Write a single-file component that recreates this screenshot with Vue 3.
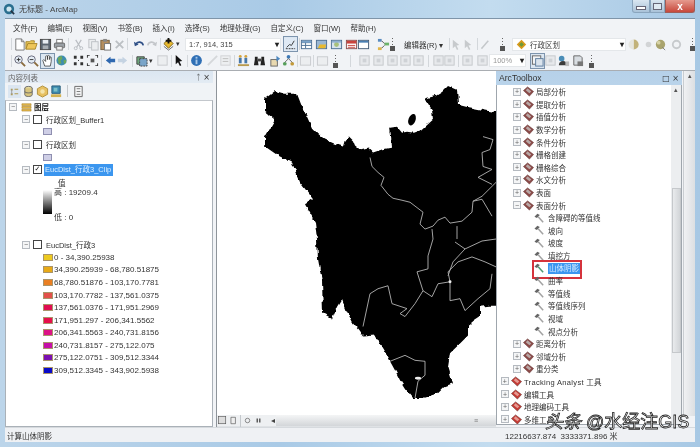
<script setup>
const I = {
  page: '<path d="M3 1h6l3 3v9H3z" fill="#fff" stroke="#777"/><path d="M9 1v3h3" fill="none" stroke="#777"/>',
  open: '<path d="M1 12V4h4l1-1h4v2" fill="#e8c85a" stroke="#a8852a"/><path d="M1 12l2-6h10l-2 6z" fill="#eec65a" stroke="#a8852a"/>',
  save: '<rect x="1.500" y="1.500" width="11" height="11" fill="#5b6570" stroke="#444"/><rect x="4" y="2" width="6" height="4" fill="#e8edf2"/><rect x="4" y="8" width="6" height="4" fill="#a7adb3"/>',
  print: '<rect x="4" y="1.500" width="6" height="4" fill="#fff" stroke="#777"/><rect x="1.500" y="5.500" width="11" height="5" rx="1" fill="#9aa0a6" stroke="#666"/><rect x="4" y="9" width="6" height="4" fill="#eee" stroke="#777"/>',
  cut: '<path d="M4 2l5 8M10 2l-5 8" stroke="#b9bdc2" stroke-width="1.300" fill="none"/><circle cx="4" cy="11" r="1.600" fill="none" stroke="#b9bdc2"/><circle cx="10" cy="11" r="1.600" fill="none" stroke="#b9bdc2"/>',
  copy: '<rect x="2" y="1.500" width="7" height="9" fill="#eceef0" stroke="#bcc0c4"/><rect x="5" y="4" width="7" height="9" fill="#eceef0" stroke="#bcc0c4"/>',
  paste: '<rect x="2" y="2.500" width="9" height="10" fill="#b48e5e" stroke="#77603f"/><rect x="4.500" y="1" width="4" height="3" fill="#888"/><rect x="6" y="6" width="6.500" height="7" fill="#fff" stroke="#777"/>',
  del: '<path d="M3 3l8 8M11 3l-8 8" stroke="#bcc0c4" stroke-width="2"/>',
  undo: '<path d="M3 7a4.200 4.200 0 0 1 8 1" fill="none" stroke="#2e4f86" stroke-width="1.800"/><path d="M1 4l1 5 4-2z" fill="#2e4f86"/>',
  redo: '<path d="M11 7a4.200 4.200 0 0 0-8 1" fill="none" stroke="#c3c6ca" stroke-width="1.800"/><path d="M13 4l-1 5-4-2z" fill="#c3c6ca"/>',
  add: '<path d="M7 1l5 5-5 5-5-5z" fill="#e8b92f" stroke="#7a6218"/><path d="M7 0v6M4 3h6" stroke="#111" stroke-width="2"/><path d="M2 9l5 4 5-4" fill="none" stroke="#666"/>',
  graph: '<rect x="0" y="0" width="14" height="14" fill="#dfe9f4"/><path d="M3 10l3-3 2 1 3-5" stroke="#333" fill="none"/><path d="M2 11.500h10" stroke="#333" stroke-dasharray="2 1"/>',
  table: '<rect x="1.500" y="2.500" width="11" height="9" fill="#fff" stroke="#4d6f93"/><path d="M1.500 5h11M1.500 8h11M6 3v8" stroke="#4d6f93"/><rect x="2" y="3" width="10" height="2" fill="#7ba3c9"/>',
  cat: '<rect x="1.500" y="2.500" width="11" height="9" fill="#9ab7d3" stroke="#4d6f93"/><path d="M3 11l2-4h7l-1 4z" fill="#e8b92f"/>',
  cat2: '<rect x="1.500" y="2.500" width="11" height="9" fill="#d7e3ee" stroke="#4d6f93"/><circle cx="7" cy="7" r="2.600" fill="#a8c07a"/><path d="M2 3h10v2H2z" fill="#8fb0cf"/>',
  red: '<rect x="1.500" y="2.500" width="11" height="9" fill="#fff" stroke="#8a4d4d"/><path d="M2 3h10v3H2z" fill="#c9423c"/><path d="M3 8h8M3 10h8" stroke="#c9423c"/>',
  win: '<rect x="1.500" y="2.500" width="11" height="9" fill="#fff" stroke="#435a74"/><rect x="2" y="3" width="10" height="2" fill="#4a7fb2"/>',
  model: '<rect x="1" y="1" width="4" height="3" fill="#5a8cc0"/><rect x="8" y="5" width="5" height="3" fill="#6db36b"/><rect x="1" y="10" width="4" height="3" fill="#e0b64a"/><path d="M5 3l3 3M5 11l3-3" stroke="#555"/>',
  gedit: '<path d="M3 11L10 3" stroke="#c4c7ca" stroke-width="1.600"/><path d="M2 12l2-1-1-1z" fill="#c4c7ca"/>',
  garrow: '<path d="M3 2v9l2.500-2 2 4 1.500-1-2-4 3-.5z" fill="#c7cacd"/>',
  moon: '<path d="M6 1.500a5.500 5.500 0 0 1 0 11z" fill="#c2b27a"/><path d="M6 1.500a5.500 5.500 0 0 0 0 11z" fill="#e6e6e0"/>',
  dot: '<circle cx="7" cy="7" r="3" fill="#d2d4d6"/>',
  geo: '<circle cx="7" cy="7" r="5" fill="#a9a36d"/><circle cx="5" cy="5" r="2" fill="#d7d3a5"/><path d="M9 10l3 3" stroke="#777"/>',
  ring: '<circle cx="7" cy="7" r="4" fill="none" stroke="#c7cacd" stroke-width="2"/>',
  zin: '<circle cx="6" cy="6" r="4" fill="#e5edf5" stroke="#667"/><path d="M9 9l4 4" stroke="#8a6b3c" stroke-width="2"/><path d="M4 6h4M6 4v4" stroke="#333"/>',
  zout: '<circle cx="6" cy="6" r="4" fill="#e5edf5" stroke="#667"/><path d="M9 9l4 4" stroke="#8a6b3c" stroke-width="2"/><path d="M4 6h4" stroke="#333"/>',
  pan: '<path d="M4 13L2 7l1-1 2 2V2.500l1-.5 1 .5V6l0-4 1-.5 1 .5v4l1-3 1 .5V8l-1 5z" fill="#fff" stroke="#333" stroke-width=".8"/>',
  globe: '<circle cx="7" cy="7" r="5.500" fill="#3f8db0"/><path d="M3 4l4-2 1 3-2 2 1 3-3 1z" fill="#6ea85c"/><path d="M9 7l3-1 0 3-2 2z" fill="#6ea85c"/>',
  fix1: '<path d="M2 2h3v3H2zM9 2h3v3H9zM2 9h3v3H2zM9 9h3v3H9z" fill="#333"/><path d="M6.500 6.500h1v1h-1z" fill="#333"/>',
  fix2: '<path d="M1 1h3v1H2v2H1zM10 1h3v3h-1V2h-2zM1 10h1v2h2v1H1zM12 10h1v3h-3v-1h2z" fill="#333"/><path d="M5 5h4v4H5z" fill="#555"/>',
  back: '<path d="M2 7l5-4v2h5v4H7v2z" fill="#2f68b0"/>',
  fwd: '<path d="M12 7L7 3v2H2v4h5v2z" fill="#c5d3e2"/>',
  layer: '<path d="M2 3h8v8H2z" fill="#6da67a" stroke="#444"/><path d="M5 5h8v8H5z" fill="#7aa5c9" stroke="#444" stroke-dasharray="2 1"/>',
  gbox: '<rect x="2" y="2" width="10" height="10" fill="#eceef0" stroke="#c6c9cc"/>',
  sel: '<path d="M4 1v10l2.500-2 2 4 1.500-1-2-4 3-.5z" fill="#111"/>',
  info: '<circle cx="7" cy="7" r="5.800" fill="#2f6fb5"/><rect x="6" y="6" width="2" height="5" fill="#a9c8e8"/><rect x="6" y="3" width="2" height="2" fill="#a9c8e8"/>',
  meas: '<path d="M2 12L12 2" stroke="#d5d7da" stroke-width="2"/>',
  lines: '<rect x="2" y="2" width="10" height="10" fill="#edeff1" stroke="#cfd1d4"/><path d="M4 5h6M4 8h6" stroke="#bbb"/>',
  cols: '<path d="M1 11h12v2H1z" fill="#b99a4e"/><rect x="2" y="4" width="3" height="6" fill="#4777a9"/><rect x="8" y="4" width="3" height="6" fill="#4777a9"/><circle cx="3.500" cy="2.500" r="1.500" fill="#d5a33b"/><circle cx="9.500" cy="2.500" r="1.500" fill="#d5a33b"/>',
  bino: '<path d="M2 3h3v3l1 6H1l1-6zM9 3h3v3l1 6H8l1-6z" fill="#222"/><rect x="5" y="5" width="4" height="3" fill="#444"/>',
  gomap: '<rect x="2" y="6" width="7" height="7" fill="#e9d9b0" stroke="#666"/><path d="M8 2l4 3-4 3z" fill="#4b86bf"/>',
  net: '<circle cx="7" cy="3" r="2" fill="#3c78b5"/><circle cx="3" cy="10.500" r="2" fill="#56a05a"/><circle cx="11" cy="10.500" r="2" fill="#c39a39"/><path d="M7 5L3 9M7 5l4 4" stroke="#666"/>',
  gwin: '<rect x="1.500" y="3" width="11" height="9" fill="#eceef0" stroke="#c7cacd"/>',
  tzoom: '<rect x="1.500" y="2" width="9" height="9" fill="#f2f4f6" stroke="#666"/><rect x="5" y="5" width="8" height="8" fill="#dbe4ed" stroke="#5b7a9b"/>',
  gz: '<rect x="2" y="2" width="10" height="10" fill="#e7e9ec" stroke="#c4c7cb"/><rect x="5" y="5" width="4" height="4" fill="#cfd2d6"/>',
  book: '<circle cx="5" cy="5" r="3" fill="#4a8db7"/><path d="M2 12a4 4 0 0 1 9 0z" fill="#3b3b3b"/><path d="M9 8h4v5H9z" fill="#bbb"/>',
  doc: '<path d="M3 2h7l2 2v8H3z" fill="#d8dde2" stroke="#666"/><path d="M7 8h6v5H7z" fill="#777"/>',
  tlist: '<rect x="0" y="0" width="14" height="14" fill="#dbe6f1"/><path d="M3 4h2v2H3zM3 9h2v2H3zM7 4h4v1H7zM7 9h4v1H7z" fill="#b09a52"/><path d="M4 5v5" stroke="#999"/>',
  tsrc: '<ellipse cx="7" cy="3.500" rx="4" ry="2" fill="#e8dc9c" stroke="#666"/><path d="M3 3.500v7c0 2.500 8 2.500 8 0v-7" fill="#d8c57e" stroke="#666"/><path d="M3 7c0 2 8 2 8 0" fill="none" stroke="#666"/>',
  tvis: '<path d="M7 1l5.500 3v6L7 13l-5.500-3V4z" fill="#e7c061" stroke="#b09038"/><circle cx="7" cy="7" r="2.400" fill="#f4e4ac"/>',
  tsel: '<path d="M2 1h9v8H2z" fill="#3f8db0" stroke="#2a5d78"/><path d="M4 3h4v4H4z" fill="#7cc0c9"/><path d="M1 10h11v3H1z" fill="#d4b352"/>',
  topt: '<path d="M3 1.500h8v11H3z" fill="#f4f5f6" stroke="#666"/><path d="M5 4h4M5 7h4M5 10h4" stroke="#777"/>',
}
function flow(items) {
  let end = 5
  return items.map((it) => {
    const w = it.w ?? 13
    const x = it.x ?? it.c - w / 2
    const r = { ...it, w, gap: x - end }
    end = x + w
    return r
  })
}
const ic = (c, n, on) => ({ c, n, on, kind: 'ic' })
const sep = (c) => ({ c, w: 1, kind: 'sep' })
const grip = (c) => ({ c, w: 5, kind: 'grip' })
const tri = (c) => ({ c, w: 5, kind: 'tri' })
const bar1 = flow([
  sep(11), ic(19, 'page'), ic(31, 'open'), ic(45, 'save'), ic(59, 'print'), sep(68), ic(78, 'cut'), ic(93, 'copy'),
  ic(105, 'paste'), ic(119, 'del'), sep(127), ic(139, 'undo'), ic(151, 'redo'), sep(160), ic(168, 'add'), tri(178),
  { x: 185, w: 96, kind: 'combo', text: '1:7, 914, 315' },
  ic(290, 'graph', true), sep(299), ic(306, 'table'), ic(321, 'cat'), ic(336, 'cat2'), ic(351, 'red'), ic(363, 'win'), ic(383, 'model'), grip(392),
  { x: 404, w: 42, kind: 'text', text: '编辑器(R) ▾' }, sep(449), ic(456, 'garrow'), ic(468, 'garrow'), sep(477), ic(485, 'gedit'), grip(502),
  { x: 512, w: 114, kind: 'combo', text: '行政区划', layer: true },
  ic(634, 'moon'), ic(648, 'dot'), ic(660, 'geo'), ic(676, 'ring'), grip(692),
])
const bar2 = flow([
  sep(11), ic(19, 'zin'), ic(32, 'zout'), ic(47, 'pan', true), ic(61, 'globe'), ic(78, 'fix1'), ic(92, 'fix2'), sep(101), ic(110, 'back'), ic(122, 'fwd'), sep(132),
  ic(141, 'layer'), tri(151), ic(162, 'gbox'), sep(171), ic(178, 'sel'), sep(187), ic(196, 'info'), ic(212, 'meas'), ic(225, 'lines'), sep(234), ic(243, 'cols'), ic(259, 'bino'), ic(275, 'gomap'), ic(288, 'net'), sep(297),
  ic(305, 'gwin'), sep(313), ic(322, 'gwin'), grip(335), sep(350),
  ic(364, 'gz'), ic(378, 'gz'), ic(392, 'gz'), ic(405, 'gz'), ic(418, 'gz'), sep(428), ic(438, 'gz'), ic(449, 'gz'), sep(458), ic(467, 'gz'), ic(482, 'gz'),
  { x: 489, w: 37, kind: 'combo', text: '100%', small: true },
  ic(537, 'tzoom', true), ic(550, 'gz'), ic(563, 'book'), ic(577, 'doc'), grip(591),
])
const menus = ['文件(F)', '编辑(E)', '视图(V)', '书签(B)', '插入(I)', '选择(S)', '地理处理(G)', '自定义(C)', '窗口(W)', '帮助(H)']
const tocTools = ['tlist', 'tsrc', 'tvis', 'tsel']
const legend = [
  ['#ecc91f', '0 - 34,390.25938'], ['#e8a916', '34,390.25939 - 68,780.51875'], ['#ea7f22', '68,780.51876 - 103,170.7781'],
  ['#e2504a', '103,170.7782 - 137,561.0375'], ['#e00d52', '137,561.0376 - 171,951.2969'], ['#e60f4c', '171,951.297 - 206,341.5562'],
  ['#dc1286', '206,341.5563 - 240,731.8156'], ['#c50fa8', '240,731.8157 - 275,122.075'], ['#7a10b0', '275,122.0751 - 309,512.3344'], ['#0a0ac8', '309,512.3345 - 343,902.5938'],
]
const tree = [
  [1, '局部分析'], [1, '提取分析'], [1, '插值分析'], [1, '数学分析'], [1, '条件分析'], [1, '栅格创建'], [1, '栅格综合'], [1, '水文分析'], [1, '表面'],
  [1, '表面分析', true], [2, '含障碍的等值线'], [2, '坡向'], [2, '坡度'], [2, '填挖方'], [2, '山体阴影', false, true], [2, '曲率'], [2, '等值线'], [2, '等值线序列'], [2, '视域'], [2, '视点分析'],
  [1, '距离分析'], [1, '邻域分析'], [1, '重分类'], [0, 'Tracking Analyst 工具', false, false, true], [0, '编辑工具'], [0, '地理编码工具'], [0, '多维工具'],
].map(([lv, text, open, sel, lat]) => ({ lv, text, open, sel, lat }))
const outline = '265,99 275,91 285,94 297,94 302,107 307,117 312,128 318,134 325,140 334,144 343,147 345,140 349,137 353,141 355,146 360,150 368,148 373,153 382,150 392,148 391,136 390,128 397,127 402,133 407,132 414,133 422,130 433,120 432,110 425,99 436,96 442,92 448,86 457,90 458,105 466,107 472,108 482,110 492,112 505,112 505,307 488,307 480,308 480,318 474,322 468,327 468,337 459,346 450,355 448,368 453,385 445,388 438,395 423,400 413,400 405,390 400,382 396,374 390,363 383,350 375,337 363,338 358,331 353,325 347,313 342,300 337,308 332,320 323,315 322,283 318,260 317,240 315,223 305,205 313,200 300,183 292,163 278,156 265,147 265,138 275,120 265,112'
const lines = [
  '370,158 372,167 378,173 384,178 381,186 388,195 393,199 402,201 410,203 423,213 420,225 425,230 433,227 438,221 445,218 450,224 462,222 472,213 473,202 482,197 492,187 496,183',
  '432,230 433,240 428,257 428,270 417,273 423,292 415,305 405,318 400,315 407,310 392,305 388,287 378,290 370,295 363,328',
  '423,292 432,298 438,285 450,283 448,273 458,263 472,258 485,263 496,268',
  '450,283 450,302 460,300 465,312 478,300 490,290 492,275',
  '455,243 465,250 453,263 448,277', '465,250 482,242 496,240',
  '483,137 493,140 490,150 482,153 483,167 492,170 478,178 492,185', '473,202 482,200 492,217', '457,227 457,240',
  '390,363 405,357 415,362 425,363 425,377 418,383 415,400',
]
</script>

<template>
  <div class="win">
    <div class="title">
      <svg class="logo" viewBox="0 0 14 14"><circle cx="7" cy="7" r="6" fill="#2a6f8f"/><circle cx="7" cy="7" r="3" fill="#cfe6ef"/><path d="M9 9l4 4" stroke="#234" stroke-width="2"/></svg>
      <span class="ttext">无标题 - ArcMap</span>
      <div class="ctrls">
        <span class="c min"><i></i></span><span class="c max"><i></i></span><span class="c close">x</span>
      </div>
    </div>
    <div class="inner">
      <div class="menu"><span v-for="m in menus" :key="m">{{ m }}</span></div>
      <div v-for="(bar, bi) in [bar1, bar2]" :key="bi" class="bar">
        <div v-for="(it, i) in bar" :key="i" :class="['it', it.kind, { on: it.on }]" :style="{ width: it.w + 'px', marginLeft: it.gap + 'px' }">
          <svg v-if="it.kind === 'ic'" viewBox="0 0 14 14" v-html="I[it.n]"></svg>
          <template v-else-if="it.kind === 'combo'">
            <svg v-if="it.layer" class="lay" viewBox="0 0 14 14"><path d="M7 1l6 6-6 6-6-6z" fill="#d79a1c"/><path d="M7 4l3 3-3 3-3-3z" fill="#6a9a3a"/></svg>
            <span :class="{ gr: it.small }">{{ it.text }}</span><b>▾</b>
          </template>
          <template v-else-if="it.kind === 'text'">{{ it.text }}</template>
        </div>
      </div>
      <div class="main">
        <section class="toc">
          <header class="phead light"><span>内容列表</span><em>ᛏ ×</em></header>
          <div class="toctools">
            <svg v-for="t in tocTools" :key="t" class="tt" viewBox="0 0 14 14" v-html="I[t]"></svg><i class="tsep"></i><svg class="tt" viewBox="0 0 14 14" v-html="I.topt"></svg>
          </div>
          <div class="tocbody">
            <div class="row r0"><i class="bx">−</i><svg class="lyr" viewBox="0 0 12 12"><path d="M1 3h10v2H1zM1 6h10v2H1zM1 9h10v2H1z" fill="#e7b94a" stroke="#a57c22" stroke-width=".6"/></svg><b>图层</b></div>
            <div class="row r1"><i class="bx">−</i><i class="ck"></i><span>行政区划_Buffer1</span></div>
            <div class="row pr"><i class="patch"></i></div>
            <div class="row r1"><i class="bx">−</i><i class="ck"></i><span>行政区划</span></div>
            <div class="row pr"><i class="patch"></i></div>
            <div class="row r1"><i class="bx">−</i><i class="ck yes">✓</i><span class="hl">EucDist_行政3_Clip</span></div>
            <div class="row val">值</div>
            <div class="ramp">
              <i class="grad"></i>
              <div class="rtx"><span>高 : 19209.4</span><span>低 : 0</span></div>
            </div>
            <div class="row r1"><i class="bx">−</i><i class="ck"></i><span>EucDist_行政3</span></div>
            <div v-for="l in legend" :key="l[1]" class="row pr lg"><i class="sw" :style="{ background: l[0] }"></i><span>{{ l[1] }}</span></div>
          </div>
        </section>
        <section class="mapwrap">
          <div class="map">
            <svg viewBox="217 71 279 346" preserveAspectRatio="none">
              <defs>
                <filter id="rough" x="-5%" y="-5%" width="110%" height="110%">
                  <feTurbulence type="fractalNoise" baseFrequency="0.16" numOctaves="2" seed="4"/>
                  <feDisplacementMap in="SourceGraphic" scale="5" xChannelSelector="R" yChannelSelector="G"/>
                </filter>
              </defs>
              <polygon :points="outline" fill="#000" filter="url(#rough)"/>
              <ellipse cx="412" cy="120" rx="3.500" ry="6" transform="rotate(20 412 120)" fill="#000"/>
              <polyline v-for="(p, i) in lines" :key="i" :points="p" fill="none" stroke="#b5b5b5" stroke-width=".9"/>
              <ellipse cx="418" cy="380" rx="3" ry="1.500" fill="#eee"/>
              <circle cx="450" cy="283" r="1.500" fill="#eee"/>
            </svg>
          </div>
          <div class="mapbar">
            <div class="mbtn">
              <svg viewBox="0 0 14 14"><rect x="1" y="1" width="11" height="11" fill="#ddd" stroke="#555"/></svg>
              <svg viewBox="0 0 14 14"><path d="M3 2h7v10H3z" fill="#eee" stroke="#555"/></svg>
              <i class="tsep"></i>
              <svg viewBox="0 0 14 14"><circle cx="7" cy="7" r="3.500" fill="none" stroke="#555"/></svg>
              <svg viewBox="0 0 14 14"><path d="M4 4h2v6H4zM8 4h2v6H8z" fill="#444"/></svg>
              <em>◂</em>
            </div>
            <div class="hthumb"><span>≡</span></div>
          </div>
        </section>
        <section class="tbx">
          <header class="phead blue"><span>ArcToolbox</span><em>□ ×</em></header>
          <div class="tbody">
            <div class="tlist">
              <div v-for="(n, i) in tree" :key="i" :class="['trow', 'lv' + n.lv, { lat: n.lat }]">
                <i v-if="n.lv < 2" class="bx">{{ n.open ? '−' : '+' }}</i>
                <svg v-if="n.lv < 2" :class="['tbicon', { top: n.lv === 0 }]" viewBox="0 0 12 12">
                  <path d="M0.500 5L5 1l6.500 5L7 11z" :fill="n.lv === 0 ? '#c63a34' : '#8c4a48'" stroke="#5d2d2b" stroke-width=".6"/>
                  <path d="M3 4.500l2-2 4 3.500-2 2z" :fill="n.lv === 0 ? '#e69a92' : '#b9a9a7'"/>
                </svg>
                <svg v-else class="ham" viewBox="0 0 12 12">
                  <path d="M0.500 4.500L4 1l3 1.500-3.500 3.500z" fill="#666"/><path d="M5 4.500l6 6.500" :stroke="n.sel ? '#4d9a72' : '#a2a2a2'" stroke-width="1.800"/>
                </svg>
                <span :class="{ tsel: n.sel }">{{ n.text }}</span>
                <i v-if="n.sel" class="redbox"></i>
              </div>
            </div>
            <div class="vs inner-vs"><em>▴</em><i class="vthumb"></i></div>
          </div>
        </section>
        <div class="vs outer-vs"><em>▴</em></div>
      </div>
      <div class="status"><span>计算山体阴影</span><span class="xy">12216637.874&nbsp; 3333371.896 米</span></div>
    </div>
    <div class="wm"><i>头条</i> @水经注GIS</div>
  </div>
</template>

<style>
html, body { margin: 0; background: #b9d2e8; }
</style>
<style scoped>
.win { position: relative; width: 700px; height: 447px; box-sizing: border-box; padding: 0 5px 5px; overflow: hidden; display: flex; flex-direction: column;
  background: linear-gradient(90deg, #bcd5ea, #a9cae6 40%, #c3dcef 70%, #a7c8e4); font: 7.500px "Liberation Sans", "Noto Sans CJK SC", sans-serif; color: #222; filter: blur(.4px); }
.title { height: 18px; flex: none; display: flex; align-items: center; }
.logo { width: 12px; height: 12px; margin: 0 2px 0 -2px; flex: none; }
.ttext { font-size: 8px; color: #444; margin-top: -1px; margin-left: 2px; }
.ctrls { margin-left: auto; align-self: flex-start; display: flex; height: 13px; }
.c { display: flex; align-items: center; justify-content: center; box-sizing: border-box; border: 1px solid #8aa5bd; border-top: 0; background: linear-gradient(#d9e6f1, #a9c2d8); }
.min { width: 18px; border-radius: 0 0 0 3px; } .max { width: 15px; }
.min i { width: 8px; height: 2px; background: #fff; border: .5px solid #667; margin-top: 3px; } .max i { width: 7px; height: 5px; border: 1px solid #667; background: #dfe9f2; }
.close { width: 30px; background: linear-gradient(#e59a8e, #c8483b); color: #fff; font: bold 10px "Liberation Sans", sans-serif; border-radius: 0 0 3px 0; border-color: #a05c55; }
.inner { flex: 1; min-height: 0; display: flex; flex-direction: column; background: #f1f3f6; border-top: 1px solid #7f95a9; }
.menu { height: 17px; flex: none; display: flex; align-items: center; padding-left: 8px; font-size: 7.500px; color: #333; }
.menu span { margin-right: 10px; white-space: nowrap; }
.bar { height: 16.500px; flex: none; display: flex; align-items: center; }
.it { flex: none; height: 14px; box-sizing: border-box; display: flex; align-items: center; }
.ic svg { width: 13px; height: 13px; display: block; }
.ic.on { outline: 1px solid #7d94ad; background: #dbe6f1; }
.sep { background: #d3d7db; height: 12px; }
.grip { height: 14px; flex-direction: column; background: radial-gradient(circle, #666 0 .8px, transparent 1px) 0 0 / 5px 3px repeat-y; position: relative; }
.grip::after { content: ""; position: absolute; bottom: 0; left: 0; width: 5px; height: 5px; background: #555; }
.tri::after { content: "▾"; font-size: 7px; color: #333; }
.combo { background: #fff; border: 1px solid #e4e7ea; height: 13px; padding: 0 1px 0 3px; color: #444; font-size: 7.500px; white-space: nowrap; }
.combo b { margin-left: auto; font-size: 8px; color: #222; }
.combo .gr { color: #999; }
.combo .lay { width: 11px; height: 11px; margin-right: 3px; flex: none; }
.text { font-size: 7.500px; color: #333; white-space: nowrap; }
.main { flex: 1; min-height: 0; display: flex; margin-top: 1px; border-top: 1px solid #a9adb2; }
.toc { width: 208px; flex: none; display: flex; flex-direction: column; margin-right: 3px; }
.phead { height: 12px; flex: none; display: flex; align-items: center; justify-content: space-between; padding: 0 3px; font-size: 7.500px; }
.phead em { font: 8px "DejaVu Sans", sans-serif; color: #333; }
.light { background: linear-gradient(#dbe6f1, #e3ebf3); color: #666; }
.blue { background: linear-gradient(#b6d1e9, #b9d3ea); color: #333; font-size: 8.600px; height: 14px; }
.toctools { height: 16.500px; flex: none; display: flex; align-items: center; gap: 1px; padding-left: 3px; background: #f0f3f6; }
.tt { width: 13px; height: 13px; flex: none; }
.toctools .tsep { margin: 0 3px; }
.tsep { width: 1px; height: 12px; background: #c4c8cc; display: inline-block; flex: none; }
.tocbody { flex: 1; min-height: 0; background: #fff; border: 1px solid #aab1b8; border-top-color: #c3c7cc; overflow: hidden; }
.row { height: 12.600px; display: flex; align-items: center; white-space: nowrap; color: #333; box-sizing: border-box; font-size: 7.500px; }
.bx { width: 6px; height: 6px; border: 1px solid #b5bac0; flex: none; display: flex; align-items: center; justify-content: center; font: 7px/1 "Liberation Sans", sans-serif; font-style: normal; color: #666; background: #f4f5f6; }
.r0 { padding-left: 3px; } .r0 .lyr { width: 11px; height: 11px; margin: 0 2px 0 4px; } .r0 b { font-weight: 700; color: #222; }
.r1 { padding-left: 16px; }
.ck { width: 7px; height: 7px; border: 1px solid #444; background: #fff; margin: 0 4px 0 3px; flex: none; font: bold 7px/7px "DejaVu Sans", sans-serif; font-style: normal; color: #111; text-align: center; }
.hl { background: #3b96ef; color: #dbeeff; padding: 0 1px; height: 12px; line-height: 12px; margin-left: -2px; width: 67px; }
.pr { padding-left: 37px; }
.patch { width: 7px; height: 5px; border: 1px solid #8f8fb0; background: #cfcfe6; }
.val { padding-left: 52px; }
.ramp { display: flex; height: 37px; padding-left: 37px; margin-top: -2px; margin-bottom: 14.700px; }
.grad { width: 9px; height: 24px; margin-top: 3px; background: linear-gradient(#fff, #000); flex: none; }
.rtx { display: flex; flex-direction: column; justify-content: space-between; margin-left: 2px; height: 37px; white-space: nowrap; font-size: 8px; color: #333; }
.rtx span { line-height: 12px; }
.sw { width: 8px; height: 5px; border: 1px solid #a9946a; flex: none; margin-right: 1px; }
.lg span { font-size: 8px; }
.mapwrap { width: 280px; flex: none; display: flex; flex-direction: column; border-left: 1px solid #8e949a; box-sizing: border-box; }
.map { flex: 1; min-height: 0; background: #fff; overflow: hidden; }
.map svg { width: 100%; height: 100%; display: block; }
.mapbar { height: 11px; flex: none; display: flex; background: #eef0f2; border-bottom: 1px solid #dfe2e5; }
.mbtn { width: 58px; flex: none; display: flex; align-items: center; gap: 2px; padding-left: 1px; }
.mbtn svg { width: 9px; height: 9px; } .mbtn em { font-size: 8px; font-style: normal; margin-left: 6px; color: #444; }
.hthumb { flex: 1; background: linear-gradient(#f4f5f6, #d3d6d9); display: flex; align-items: center; justify-content: flex-end; padding-right: 18px; color: #777; font-size: 7px; }
.tbx { width: 186px; flex: none; display: flex; flex-direction: column; background: #f1f3f6; }
.tbody { flex: 1; min-height: 0; display: flex; background: #fff; border: 1px solid #9fa6ad; border-top: 0; margin-bottom: 2px; }
.tlist { flex: 1; min-width: 0; padding-top: .5px; overflow: hidden; }
.trow { height: 12.600px; display: flex; align-items: center; position: relative; white-space: nowrap; font-size: 7.500px; color: #333; }
.lat { letter-spacing: .32px; }
.lv0 { padding-left: 4px; } .lv1 { padding-left: 16px; } .lv2 { padding-left: 37px; }
.tbicon { width: 11px; height: 11px; margin: 0 2px 0 2px; flex: none; }
.ham { width: 10px; height: 10px; margin: 0 4px 0 0; flex: none; }
.tsel { background: #3b96ef; color: #d9ecff; padding: 0 1px; height: 11px; line-height: 11px; width: 31px; }
.redbox { position: absolute; left: 35px; top: -1.500px; width: 46px; height: 15px; border: 2px solid #d5333c; }
.vs { width: 10px; flex: none; background: #eceef0; display: flex; flex-direction: column; align-items: center; position: relative; }
.vs em { font-size: 7px; font-style: normal; color: #555; line-height: 10px; }
.vthumb { width: 9px; height: 165px; margin-top: 93px; background: linear-gradient(90deg, #e9ebed, #d2d5d8); border: 1px solid #c5c8cb; box-sizing: border-box; }
.outer-vs { width: 11px; margin-left: 1px; margin-bottom: 11px; background: linear-gradient(90deg, #f0f1f3, #dcdfe2); border-left: 1px solid #c9cdd1; }
.status { height: 14px; flex: none; display: flex; align-items: center; background: #eff1f4; padding-left: 2px; font-size: 7.500px; color: #333; border-top: 1px solid #d6dade; }
.xy { margin-left: 453px; font-size: 8px; }
.wm { position: absolute; left: 545px; top: 407px; font: 18px "Liberation Sans", "Noto Sans CJK SC", sans-serif; color: #fff; -webkit-text-stroke: .8px #222; white-space: nowrap; }
</style>
